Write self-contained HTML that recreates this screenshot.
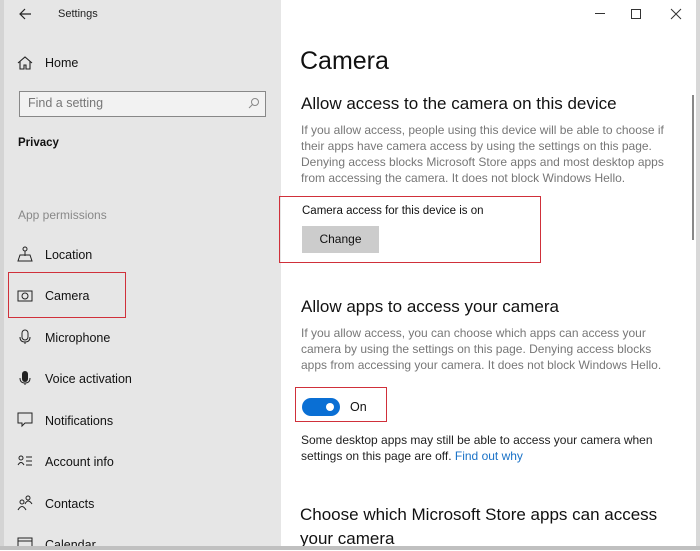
<!DOCTYPE html>
<html><head><meta charset="utf-8"><style>
*{margin:0;padding:0;box-sizing:border-box}
body{width:700px;height:550px;overflow:hidden;background:#fff;font-family:"Liberation Sans",sans-serif;position:relative;color:#000}
.a{position:absolute;white-space:nowrap}
#side{position:absolute;left:4px;top:0;width:277px;height:546px;background:#e6e6e6}
.ni{position:absolute;left:45px;font-size:12.5px;color:#111}
.ic{position:absolute;left:17px}
.g{color:#777;font-size:12px;line-height:16px}
.h{font-size:17px;color:#111}
.red{position:absolute;border:1.5px solid #d0303a}
</style></head><body>
<div class="a" style="left:0;top:0;width:4px;height:550px;background:#d4d4d4"></div>
<div id="side"></div>
<div class="a" style="left:696px;top:0;width:4px;height:550px;background:#d8d8d8"></div>

<svg class="a" style="left:18px;top:8px" width="14" height="12"><path d="M7 1L2 6L7 11M2 6H13" stroke="#222" fill="none" stroke-width="1.2"/></svg>
<div class="a" style="left:58px;top:8px;font-size:11px;color:#222">Settings</div>

<svg class="ic" style="top:56px" width="16" height="14"><path d="M1 7L8 1L15 7M3 5V13H7V9H9V13H13V5" stroke="#222" fill="none" stroke-width="1.1"/></svg>
<div class="ni" style="top:56px">Home</div>

<div class="a" style="left:19px;top:91px;width:247px;height:26px;border:1.5px solid #888;background:#f2f2f2"></div>
<div class="a" style="left:28px;top:96px;font-size:12.5px;color:#777">Find a setting</div>
<svg class="a" style="left:248px;top:97px" width="12" height="12"><circle cx="7" cy="5" r="3.5" stroke="#888" fill="none"/><path d="M4.5 7.5L1 11" stroke="#888"/></svg>

<div class="a" style="left:18px;top:137px;font-size:11.5px;font-weight:bold;color:#111">Privacy</div>
<div class="a" style="left:18px;top:208px;font-size:12px;color:#888">App permissions</div>

<svg class="ic" style="top:246px" width="16" height="16"><circle cx="8" cy="3" r="2" stroke="#222" fill="none"/><path d="M8 5V10M3 9H13L15 15H1Z" stroke="#222" fill="none"/></svg>
<div class="ni" style="top:248px">Location</div>
<svg class="ic" style="top:289px" width="16" height="13"><rect x="1" y="2" width="14" height="10" stroke="#222" fill="none"/><circle cx="8" cy="7" r="3" stroke="#222" fill="none"/></svg>
<div class="ni" style="top:289px">Camera</div>
<div class="red" style="left:8px;top:272px;width:118px;height:46px"></div>
<svg class="ic" style="top:329px" width="16" height="16"><rect x="5" y="1" width="6" height="10" rx="3" stroke="#222" fill="none"/><path d="M3 8Q3 13 8 13Q13 13 13 8M8 13V15" stroke="#222" fill="none"/></svg>
<div class="ni" style="top:331px">Microphone</div>
<svg class="ic" style="top:370px" width="16" height="16"><rect x="5" y="1" width="6" height="11" rx="3" fill="#222"/><path d="M3 8Q3 13 8 13Q13 13 13 8M8 13V15" stroke="#222" fill="none"/></svg>
<div class="ni" style="top:372px">Voice activation</div>
<svg class="ic" style="top:412px" width="16" height="16"><path d="M1 1H15V11H8L5 14V11H1Z" stroke="#222" fill="none"/></svg>
<div class="ni" style="top:414px">Notifications</div>
<svg class="ic" style="top:455px" width="16" height="12"><circle cx="4" cy="3" r="2" stroke="#222" fill="none"/><path d="M1 10Q4 5 7 10M9 2H15M9 6H15M9 10H15" stroke="#222" fill="none"/></svg>
<div class="ni" style="top:455px">Account info</div>
<svg class="ic" style="top:495px" width="16" height="16"><circle cx="5" cy="7" r="2" stroke="#222" fill="none"/><path d="M1 15Q5 8 9 15" stroke="#222" fill="none"/><circle cx="11" cy="3" r="2" stroke="#222" fill="none"/><path d="M8 9Q11 3 15 9" stroke="#222" fill="none"/></svg>
<div class="ni" style="top:497px">Contacts</div>
<svg class="ic" style="top:537px" width="16" height="10"><rect x="1" y="1" width="14" height="12" stroke="#222" fill="none"/><path d="M1 4H15" stroke="#222"/></svg>
<div class="ni" style="top:538px;height:8px;overflow:hidden">Calendar</div>

<div class="a" style="left:595px;top:13px;width:10px;height:1px;background:#333"></div>
<div class="a" style="left:631px;top:9px;width:10px;height:10px;border:1px solid #333"></div>
<svg class="a" style="left:670px;top:8px" width="12" height="12"><path d="M1 1L11 11M11 1L1 11" stroke="#333"/></svg>
<div class="a" style="left:692px;top:95px;width:2px;height:145px;background:#888"></div>

<div class="a" style="left:300px;top:47px;font-size:25px;color:#111">Camera</div>
<div class="a h" style="left:301px;top:94px">Allow access to the camera on this device</div>
<div class="a g" style="left:301px;top:122px">If you allow access, people using this device will be able to choose if<br>their apps have camera access by using the settings on this page.<br>Denying access blocks Microsoft Store apps and most desktop apps<br>from accessing the camera. It does not block Windows Hello.</div>

<div class="red" style="left:279px;top:196px;width:262px;height:67px"></div>
<div class="a" style="left:302px;top:205px;font-size:11.5px;color:#111">Camera access for this device is on</div>
<div class="a" style="left:302px;top:226px;width:77px;height:27px;background:#ccc;font-size:12px;color:#111;text-align:center;line-height:27px">Change</div>

<div class="a h" style="left:301px;top:297px">Allow apps to access your camera</div>
<div class="a g" style="left:301px;top:325px">If you allow access, you can choose which apps can access your<br>camera by using the settings on this page. Denying access blocks<br>apps from accessing your camera. It does not block Windows Hello.</div>

<div class="red" style="left:295px;top:387px;width:92px;height:35px"></div>
<div class="a" style="left:302px;top:398px;width:38px;height:18px;border-radius:9px;background:#0a6fd4"></div>
<div class="a" style="left:326px;top:403px;width:8px;height:8px;border-radius:50%;background:#fff"></div>
<div class="a" style="left:350px;top:400px;font-size:12.5px;color:#111">On</div>

<div class="a" style="left:301px;top:432px;font-size:12px;line-height:16px;color:#222">Some desktop apps may still be able to access your camera when<br>settings on this page are off. <span style="color:#1a72c7">Find out why</span></div>

<div class="a h" style="left:300px;top:503px;font-size:17px;line-height:24px">Choose which Microsoft Store apps can access<br>your camera</div>
<div class="a" style="left:0;top:546px;width:700px;height:4px;background:#c0c0c0"></div>
</body></html>
